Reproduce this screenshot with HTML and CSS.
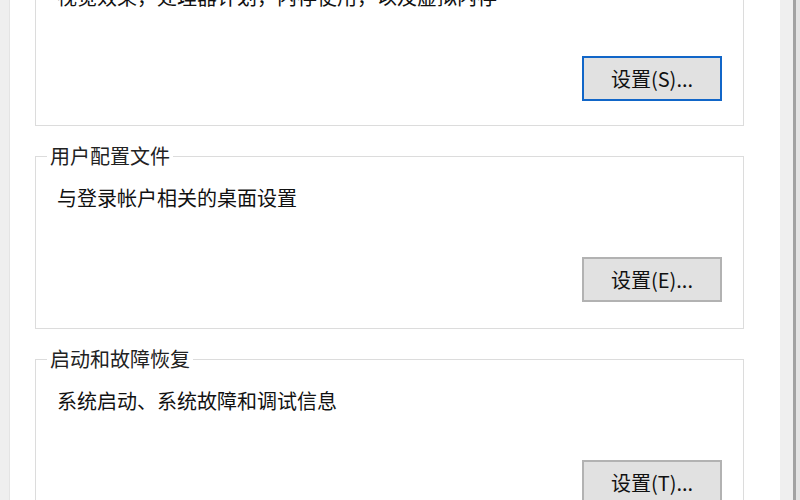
FILE: index.html
```html
<!DOCTYPE html>
<html lang="zh-CN">
<head>
    <meta charset="UTF-8">
    <title>系统属性 - 高级</title>
    <link rel="stylesheet" href="styles.css">
</head>
<body>
    <div class="window">
        <div class="edge-left"></div>
        <div class="tab-page">
            <fieldset class="group group-first">
                <legend>性能</legend>
                <p class="desc">视觉效果，处理器计划，内存使用，以及虚拟内存</p>
                <div class="actions">
                    <button class="btn btn-default">设置(S)...</button>
                </div>
            </fieldset>

            <fieldset class="group">
                <legend>用户配置文件</legend>
                <p class="desc">与登录帐户相关的桌面设置</p>
                <div class="actions">
                    <button class="btn">设置(E)...</button>
                </div>
            </fieldset>

            <fieldset class="group">
                <legend>启动和故障恢复</legend>
                <p class="desc">系统启动、系统故障和调试信息</p>
                <div class="actions">
                    <button class="btn">设置(T)...</button>
                </div>
            </fieldset>
        </div>
        <div class="edge-right"></div>
    </div>
</body>
</html>
```

FILE: styles.css
```css
* {
    margin: 0;
    padding: 0;
    box-sizing: border-box;
}

html, body {
    height: 100%;
}

body {
    overflow: hidden;
    background: #f0f0f0;
    font-family: "Noto Sans CJK SC", "Noto Sans", sans-serif;
    font-size: 20px;
    color: #111;
}

.window {
    display: flex;
    height: 100%;
}

.edge-left {
    width: 10px;
    background: #efefef;
    border-right: 1px solid #e4e4e4;
}

/* tab page body */
.tab-page {
    flex: 1;
    background: #fff;
    padding: 0 36px 0 25px;
    display: flex;
    flex-direction: column;
    gap: 20px;
}

/* window frame on the right */
.edge-right {
    width: 20px;
    background: linear-gradient(to right, #efefef 0 13px, #a2a2a2 13px 16px, #e3e3e3 16px);
}

.group {
    border: 1px solid #dcdcdc;
    padding: 22px 21px 26px 21px;
    min-width: 0;
}

.group-first {
    margin-top: -55px;
    padding-bottom: 24px;
}

.group legend {
    margin-left: -10px;
    padding: 0 3px;
    line-height: 20px;
    color: #222;
}

.desc {
    line-height: 20px;
}

.actions {
    display: flex;
    justify-content: flex-end;
    margin-top: 49px;
}

.btn {
    width: 140px;
    height: 45px;
    font-family: inherit;
    font-size: 20px;
    color: #111;
    background: #e1e1e1;
    border: 2px solid #b2b2b2;
}

/* focused default button */
.btn-default {
    border-color: #1166c8;
}
```
